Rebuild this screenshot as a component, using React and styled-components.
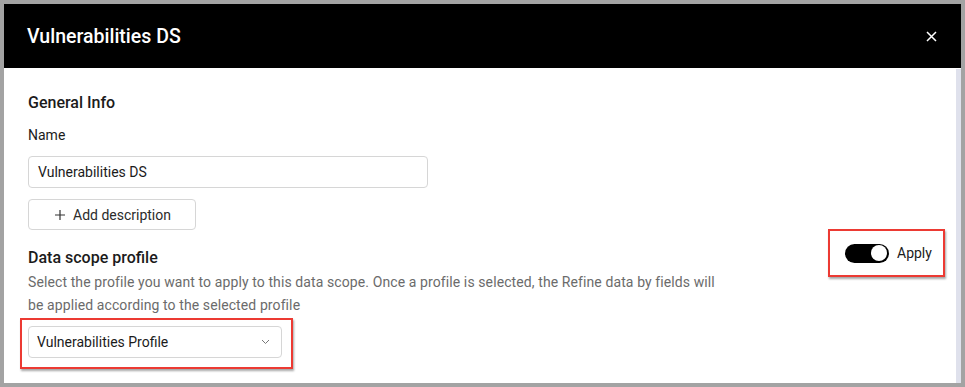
import React from "react";
import styled, { createGlobalStyle } from "styled-components";

const Global = createGlobalStyle`
  html, body { margin: 0; padding: 0; background: #a3a3a3; }
  body { font-family: Roboto, "Liberation Sans", Arial, sans-serif; }
  * { box-sizing: border-box; }
`;

const Frame = styled.div`
  width: 965px;
  height: 387px;
  border: 4px solid #a3a3a3;
  background: #ffffff;
  display: flex;
  flex-direction: column;
  overflow: hidden;
`;

const Header = styled.header`
  height: 64px;
  flex: none;
  background: #000;
  color: #fff;
  display: flex;
  align-items: center;
  justify-content: space-between;
  padding: 0 23px 0 23px;
`;

const Title = styled.h1`
  margin: 0;
  font-size: 19.5px;
  font-weight: 500;
  letter-spacing: 0;
`;

const CloseButton = styled.button`
  background: none;
  border: none;
  padding: 0;
  width: 14px;
  height: 14px;
  display: flex;
  align-items: center;
  justify-content: center;
  cursor: pointer;
`;

const BodyRow = styled.div`
  flex: 1;
  display: flex;
  min-height: 0;
`;

const Content = styled.main`
  flex: 1;
  padding: 25px 0 0 24px;
  display: flex;
  flex-direction: column;
`;

const ScrollTrack = styled.div`
  width: 5px;
  flex: none;
  margin-top: 1px;
  background: #dfe1ec;
`;

const SectionTitle = styled.h2`
  margin: 0;
  font-size: 16px;
  font-weight: 500;
  line-height: 20px;
  color: #1b1b1b;
`;

const Label = styled.label`
  display: block;
  margin-top: 12px;
  font-size: 14px;
  line-height: 20px;
  color: #1b1b1b;
`;

const TextInput = styled.div`
  margin-top: 11px;
  width: 400px;
  height: 32px;
  border: 1px solid #d6d6d6;
  border-radius: 4px;
  padding: 0 9px;
  display: flex;
  align-items: center;
  font-size: 14px;
  color: #1b1b1b;
`;

const OutlineButton = styled.button`
  margin-top: 11px;
  width: 168px;
  height: 31px;
  border: 1px solid #d6d6d6;
  border-radius: 4px;
  background: #fff;
  display: flex;
  align-items: center;
  justify-content: center;
  gap: 8px;
  font-family: inherit;
  font-size: 14px;
  color: #2b2b2b;
  padding: 0 0 0 2px;
`;

const ScopeRow = styled.div`
  margin-top: 18px;
  display: flex;
  justify-content: space-between;
  align-items: flex-start;
`;

const ScopeText = styled.div`
  display: flex;
  flex-direction: column;
`;

const Description = styled.p`
  margin: 3px 0 0;
  max-width: 700px;
  font-size: 14px;
  letter-spacing: 0.1px;
  line-height: 23px;
  color: #6b6b6b;
`;

const Annotation = styled.div`
  border: 2px solid #ec3a33;
  box-shadow: 1px 2px 2px rgba(0, 0, 0, 0.35);
  display: flex;
  align-items: center;
`;

const ToggleAnnotation = styled(Annotation)`
  width: 117px;
  height: 48px;
  margin-top: -19px;
  margin-right: 11px;
  padding: 0 0 0 15px;
  gap: 8px;
`;

const Switch = styled.div`
  width: 44px;
  height: 19px;
  border-radius: 10px;
  background: #000;
  display: flex;
  align-items: center;
  justify-content: flex-end;
  padding: 0 2px;
`;

const Knob = styled.div`
  width: 16px;
  height: 16px;
  border-radius: 50%;
  background: #fff;
`;

const SwitchLabel = styled.span`
  font-size: 14px;
  color: #1b1b1b;
`;

const SelectAnnotation = styled(Annotation)`
  margin-top: 1px;
  margin-left: -8px;
  width: 273px;
  height: 51px;
  padding: 0 9px 3px 6px;
`;

const Select = styled.div`
  width: 254px;
  height: 32px;
  border: 1px solid #d6d6d6;
  border-radius: 4px;
  padding: 0 11px 0 8px;
  display: flex;
  align-items: center;
  justify-content: space-between;
  font-size: 14px;
  color: #1b1b1b;
`;

export default function App() {
  return (
    <>
      <Global />
      <Frame>
        <Header>
          <Title>Vulnerabilities DS</Title>
          <CloseButton aria-label="Close">
            <svg width="11" height="11" viewBox="0 0 11 11">
              <path d="M1 1L10 10M10 1L1 10" stroke="#fff" strokeWidth="1.5" />
            </svg>
          </CloseButton>
        </Header>
        <BodyRow>
          <Content>
            <SectionTitle>General Info</SectionTitle>
            <Label>Name</Label>
            <TextInput>Vulnerabilities DS</TextInput>
            <OutlineButton>
              <svg width="10" height="10" viewBox="0 0 10 10">
                <path d="M5 0V10M0 5H10" stroke="#333" strokeWidth="1.2" />
              </svg>
              Add description
            </OutlineButton>
            <ScopeRow>
              <ScopeText>
                <SectionTitle>Data scope profile</SectionTitle>
                <Description>
                  Select the profile you want to apply to this data scope. Once a profile is selected, the Refine data by fields will be applied according to the selected profile
                </Description>
              </ScopeText>
              <ToggleAnnotation>
                <Switch>
                  <Knob />
                </Switch>
                <SwitchLabel>Apply</SwitchLabel>
              </ToggleAnnotation>
            </ScopeRow>
            <SelectAnnotation>
              <Select>
                Vulnerabilities Profile
                <svg width="9" height="6" viewBox="0 0 9 6">
                  <path d="M1 1L4.5 4.5L8 1" stroke="#777" strokeWidth="1" fill="none" />
                </svg>
              </Select>
            </SelectAnnotation>
          </Content>
          <ScrollTrack />
        </BodyRow>
      </Frame>
    </>
  );
}
